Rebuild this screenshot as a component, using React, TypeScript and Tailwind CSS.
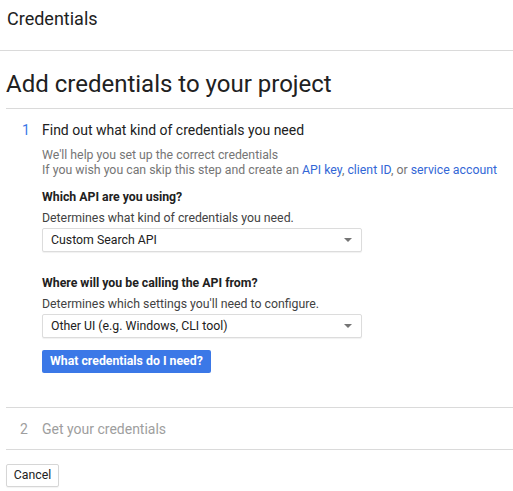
const font = { fontFamily: 'Roboto, "Liberation Sans", Arial, sans-serif' }

type SelectProps = {
  value: string
}

function FakeSelect({ value }: SelectProps) {
  return (
    <div className="flex h-[24px] w-[320px] items-center justify-between rounded-[2px] border border-[#dcdcdc] bg-white pl-[8px] pr-[9px] text-[12.3px] text-[#212121] shadow-[0_1px_1px_rgba(0,0,0,0.06)]">
      <span>{value}</span>
      <span className="h-0 w-0 border-x-[4px] border-t-[4px] border-x-transparent border-t-[#757575]" />
    </div>
  )
}

export default function App() {
  return (
    <div className="h-[491px] w-[513px] overflow-hidden bg-white" style={font}>
      <div className="h-[51px] border-b border-[#dadada] pl-[7px] pt-[7px] text-[18px] leading-[24px] text-[#212121]">
        Credentials
      </div>

      <div className="ml-[6px]">
        <h1 className="mt-[17px] border-b border-[#dadada] pb-[8px] text-[24px] leading-[32px] text-[#212121]">
          Add credentials to your project
        </h1>

        <section className="border-b border-[#dadada] pb-[34px] pt-[11px]">
          <div className="flex text-[14px] leading-[20px]">
            <span className="w-[36px] pl-[16px] text-[#3b78e7]">1</span>
            <span className="text-[#212121]">Find out what kind of credentials you need</span>
          </div>

          <div className="pl-[36px]">
            <p className="mt-[8px] whitespace-nowrap text-[12.3px] leading-[15px] text-[#757575]">
              We'll help you set up the correct credentials
              <br />
              If you wish you can skip this step and create an{' '}
              <a className="text-[#3367d6]">API key</a>,{' '}
              <a className="text-[#3367d6]">client ID</a>, or{' '}
              <a className="text-[#3367d6]">service account</a>
            </p>

            <p className="mt-[11px] text-[12.3px] font-bold leading-[16px] text-[#212121]">
              Which API are you using?
            </p>
            <p className="mt-[5px] text-[12.3px] leading-[16px] text-[#424242]">
              Determines what kind of credentials you need.
            </p>
            <div className="mt-[2px]">
              <FakeSelect value="Custom Search API" />
            </div>

            <p className="mt-[23px] text-[12.3px] font-bold leading-[16px] text-[#212121]">
              Where will you be calling the API from?
            </p>
            <p className="mt-[5px] text-[12.3px] leading-[16px] text-[#424242]">
              Determines which settings you'll need to configure.
            </p>
            <div className="mt-[2px]">
              <FakeSelect value="Other UI (e.g. Windows, CLI tool)" />
            </div>

            <button className="mt-[12px] h-[23px] rounded-[2px] bg-[#3b78e7] px-[8px] text-[12.3px] font-bold text-white">
              What credentials do I need?
            </button>
          </div>
        </section>

        <section className="flex border-b border-[#dadada] pb-[10px] pt-[11px] text-[14px] leading-[20px] text-[#9e9e9e]">
          <span className="w-[36px] pl-[14px]">2</span>
          <span>Get your credentials</span>
        </section>

        <button className="mt-[14px] h-[23px] w-[53px] rounded-[2px] border border-[#d6d6d6] bg-white text-[12.3px] text-[#212121] shadow-[0_1px_1px_rgba(0,0,0,0.05)]">
          Cancel
        </button>
      </div>
    </div>
  )
}
